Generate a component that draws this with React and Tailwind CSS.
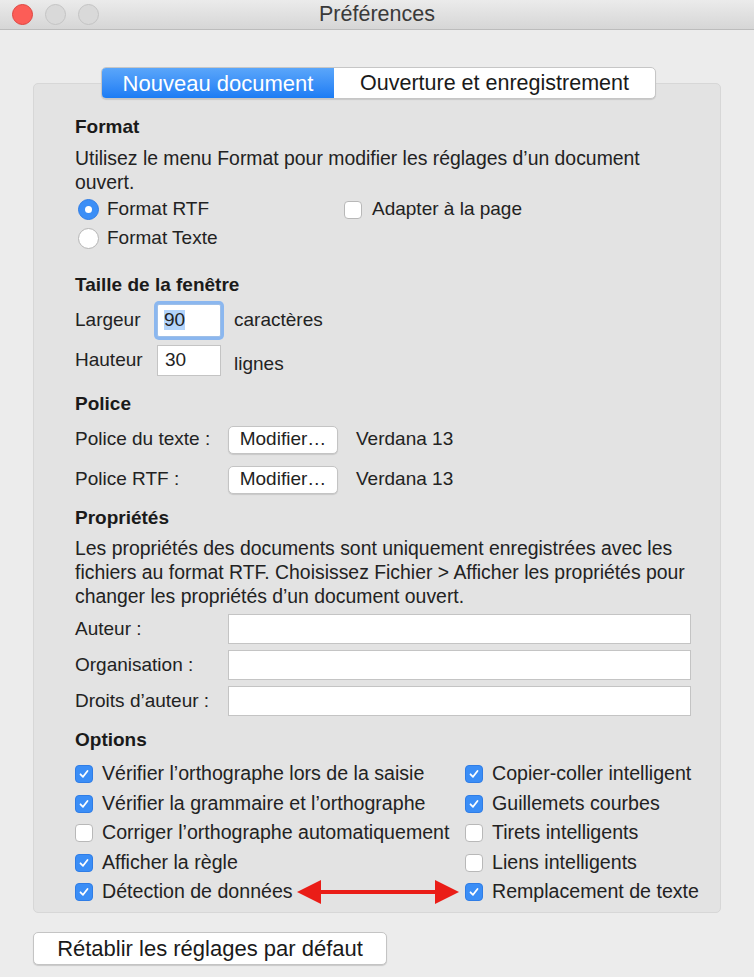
import React from 'react';

const font = { fontFamily: '"Liberation Sans", Arial, sans-serif' };

function TrafficLight({ color, border }) {
  return <div className={`w-[21px] h-[21px] rounded-full border ${color} ${border}`} />;
}

function Check({ checked }) {
  if (!checked) {
    return <div className="w-[18px] h-[18px] rounded-[4px] bg-white border border-[#b8b8b8] shrink-0" />;
  }
  return (
    <div className="w-[18px] h-[18px] rounded-[4px] bg-[#3b8ef6] border border-[#2f7de6] shrink-0 flex items-center justify-center">
      <svg width="12" height="12" viewBox="0 0 12 12">
        <path d="M2.5 6.3 L5 8.8 L9.5 3" fill="none" stroke="white" strokeWidth="1.8" strokeLinecap="round" strokeLinejoin="round" />
      </svg>
    </div>
  );
}

function Radio({ checked }) {
  if (checked) {
    return (
      <div className="w-[21px] h-[21px] rounded-full bg-[#3b8ef6] border border-[#2f7de6] flex items-center justify-center shrink-0">
        <div className="w-[7px] h-[7px] rounded-full bg-white" />
      </div>
    );
  }
  return <div className="w-[21px] h-[21px] rounded-full bg-white border border-[#b5b5b5] shrink-0" />;
}

function Heading({ children, className = '' }) {
  return <div className={`h-6 leading-6 text-[19px] font-bold text-[#1a1a1a] ${className}`}>{children}</div>;
}

function Field({ label, className = '' }) {
  return (
    <div className={`flex items-center h-[30px] ${className}`}>
      <div className="w-[153px] text-[19px] text-[#222]">{label}</div>
      <div className="w-[463px] h-[30px] bg-white border border-[#c4c4c4]" />
    </div>
  );
}

function Option({ checked, label }) {
  return (
    <div className="flex items-center h-6 gap-[9px]">
      <Check checked={checked} />
      <span className="text-[19.6px] text-[#222] whitespace-nowrap">{label}</span>
    </div>
  );
}

function ModifyButton() {
  return (
    <div className="w-[110px] h-[28px] bg-white border border-[#c4c4c4] rounded-[5px] shadow-[0_1px_1px_rgba(0,0,0,0.12)] flex items-center justify-center text-[19px] text-[#222]">
      Modifier…
    </div>
  );
}

export default function App() {
  const left = [
    [true, 'Vérifier l’orthographe lors de la saisie'],
    [true, 'Vérifier la grammaire et l’orthographe'],
    [false, 'Corriger l’orthographe automatiquement'],
    [true, 'Afficher la règle'],
    [true, 'Détection de données'],
  ];
  const right = [
    [true, 'Copier-coller intelligent'],
    [true, 'Guillemets courbes'],
    [false, 'Tirets intelligents'],
    [false, 'Liens intelligents'],
    [true, 'Remplacement de texte'],
  ];

  return (
    <div className="w-[754px] h-[977px] bg-[#ececec] overflow-hidden" style={font}>
      {/* title bar */}
      <div className="relative h-[30px] bg-gradient-to-b from-[#ebebeb] to-[#d6d6d6] border-b border-[#bcbcbc] flex items-center">
        <div className="flex items-center gap-[12px] pl-[12px]">
          <TrafficLight color="bg-[#fc5d57]" border="border-[#de4540]" />
          <TrafficLight color="bg-[#d9d9d9]" border="border-[#c4c4c4]" />
          <TrafficLight color="bg-[#d9d9d9]" border="border-[#c4c4c4]" />
        </div>
        <div className="absolute inset-0 flex items-center justify-center text-[21.5px] text-[#3a3a3a]">Préférences</div>
      </div>

      <div className="px-[33px] pt-[37px]">
        {/* tabs */}
        <div className="relative z-10 flex justify-center pl-[3px]">
          <div className="flex h-[32px] rounded-[5px] border border-[#c6c6c6] bg-white shadow-[0_1px_1px_rgba(0,0,0,0.12)] overflow-hidden">
            <div className="w-[232px] flex items-center justify-center bg-gradient-to-b from-[#5aa6fa] to-[#1b7cf4] text-white text-[22px]">
              Nouveau document
            </div>
            <div className="w-[321px] flex items-center justify-center text-[21.5px] text-[#1a1a1a]">
              Ouverture et enregistrement
            </div>
          </div>
        </div>

        {/* group box */}
        <div className="-mt-4 h-[830px] rounded-[5px] bg-[#e3e3e3] border border-[#d7d7d7] pl-[41px] pt-[31px] flex flex-col">
          <Heading>Format</Heading>
          <div className="mt-[7px] text-[19.4px] leading-6 text-[#222] whitespace-nowrap">
            Utilisez le menu Format pour modifier les réglages d’un document
            <br />
            ouvert.
          </div>
          <div className="mt-[1px] flex">
            <div className="w-[269px] flex flex-col">
              <div className="h-[29px] flex items-center gap-[8px] pl-[3px]">
                <Radio checked />
                <span className="text-[19px] text-[#222]">Format RTF</span>
              </div>
              <div className="h-[29px] flex items-center gap-[8px] pl-[3px]">
                <Radio />
                <span className="text-[19px] text-[#222]">Format Texte</span>
              </div>
            </div>
            <div className="h-[29px] flex items-center gap-[10px]">
              <Check />
              <span className="text-[19px] text-[#222]">Adapter à la page</span>
            </div>
          </div>

          <Heading className="mt-[20px]">Taille de la fenêtre</Heading>
          <div className="mt-[6px] h-[34px] flex items-center">
            <div className="w-[82px] text-[19px] text-[#222]">Largeur</div>
            <div className="w-[64px] h-[33px] bg-white border border-[#9ebfe8] ring-[3px] ring-[#8bb7ef] rounded-[2px] flex items-center pl-[6px]">
              <span className="text-[19px] text-[#222] bg-[#b3d4fb] leading-5">90</span>
            </div>
            <div className="ml-[13px] text-[19px] text-[#222]">caractères</div>
          </div>
          <div className="mt-[7px] h-[32px] flex items-center">
            <div className="w-[82px] text-[19px] text-[#222]">Hauteur</div>
            <div className="w-[64px] h-[31px] bg-white border border-[#c4c4c4] flex items-center pl-[7px]">
              <span className="text-[19px] text-[#222]">30</span>
            </div>
            <div className="ml-[13px] mt-[8px] text-[19px] text-[#222]">lignes</div>
          </div>

          <Heading className="mt-[16px]">Police</Heading>
          <div className="mt-[9px] h-[29px] flex items-center">
            <div className="w-[153px] text-[19px] text-[#222]">Police du texte :</div>
            <ModifyButton />
            <div className="ml-[18px] text-[19px] text-[#222]">Verdana 13</div>
          </div>
          <div className="mt-[11px] h-[29px] flex items-center">
            <div className="w-[153px] text-[19px] text-[#222]">Police RTF :</div>
            <ModifyButton />
            <div className="ml-[18px] text-[19px] text-[#222]">Verdana 13</div>
          </div>

          <Heading className="mt-[12px]">Propriétés</Heading>
          <div className="mt-[6px] text-[19.4px] leading-6 text-[#222] whitespace-nowrap">
            Les propriétés des documents sont uniquement enregistrées avec les
            <br />
            fichiers au format RTF. Choisissez Fichier &gt; Afficher les propriétés pour
            <br />
            changer les propriétés d’un document ouvert.
          </div>
          <Field label="Auteur :" className="mt-[6px]" />
          <Field label="Organisation :" className="mt-[6px]" />
          <Field label="Droits d’auteur :" className="mt-[6px]" />

          <Heading className="mt-[12px]">Options</Heading>
          <div className="relative mt-[10px] flex">
            <div className="w-[390px] flex flex-col gap-[5.5px]">
              {left.map(([c, l]) => (
                <Option key={l} checked={c} label={l} />
              ))}
            </div>
            <div className="flex flex-col gap-[5.5px]">
              {right.map(([c, l]) => (
                <Option key={l} checked={c} label={l} />
              ))}
            </div>
            {/* red annotation arrow */}
            <svg className="absolute left-[222px] bottom-[-6px]" width="162" height="36" viewBox="0 0 162 36">
              <line x1="20" y1="18" x2="142" y2="18" stroke="#ea1d17" strokeWidth="4" />
              <polygon points="0,18 24,6 24,30" fill="#ea1d17" />
              <polygon points="162,18 138,6 138,30" fill="#ea1d17" />
            </svg>
          </div>
        </div>

        {/* reset button */}
        <div className="mt-[19px] w-[354px] h-[33px] bg-white border border-[#c4c4c4] rounded-[5px] shadow-[0_1px_1px_rgba(0,0,0,0.15)] flex items-center justify-center text-[22px] text-[#1a1a1a]">
          Rétablir les réglages par défaut
        </div>
      </div>
    </div>
  );
}
